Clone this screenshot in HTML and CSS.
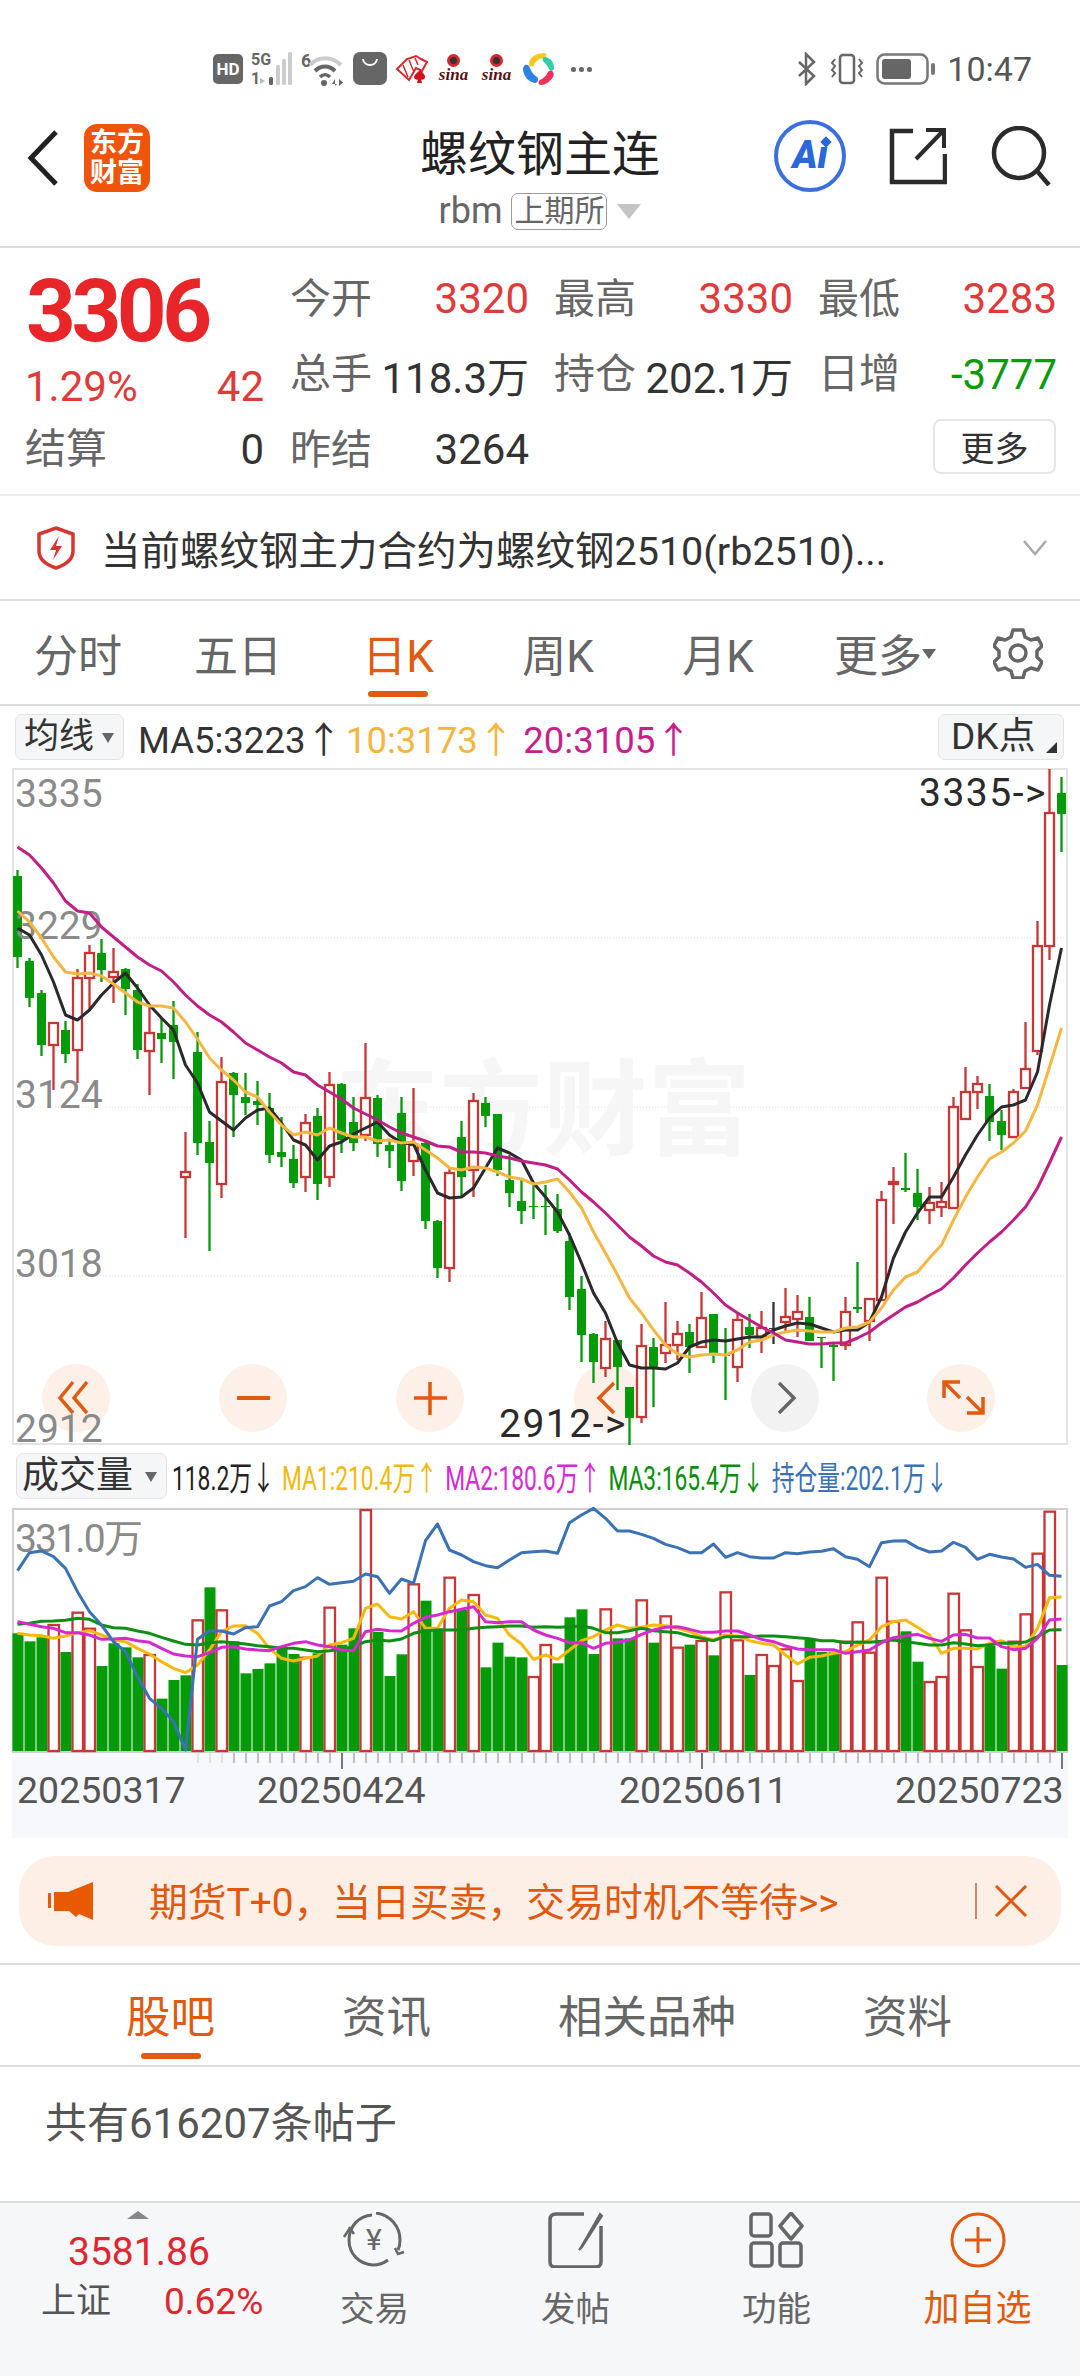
FILE: index.html
```html
<!DOCTYPE html>
<html lang="zh-CN">
<head>
  <meta charset="UTF-8" />
  <meta name="viewport" content="width=device-width, initial-scale=1.0" />
  <title>螺纹钢主连</title>
  <link rel="stylesheet" href="styles.css">
</head>
<body>
  <div class="status-bar">
    <div class="status-left">
      <span class="hd">HD</span>
      <svg class="st-signal" width="42" height="36" viewBox="0 0 42 36">
        <text x="0" y="14" class="st-tiny">5G</text>
        <text x="0" y="33" class="st-tiny">1</text>
        <path d="M9 33v-6l5 3z" fill="#bbb"/>
        <rect x="18" y="26" width="4" height="8" rx="1.5" fill="#666"/>
        <rect x="25" y="14" width="4" height="20" rx="1.5" fill="#ccc"/>
        <rect x="31" y="8" width="4" height="26" rx="1.5" fill="#ccc"/>
        <rect x="37" y="1" width="4" height="33" rx="1.5" fill="#ccc"/>
      </svg>
      <svg class="st-wifi" width="44" height="36" viewBox="0 0 44 36">
        <text x="0" y="16" class="st-six">6</text>
        <path d="M9 14C17 5 31 5 40 14" fill="none" stroke="#ccc" stroke-width="4"/>
        <path d="M14 20C20 14 28 14 34 20" fill="none" stroke="#666" stroke-width="4"/>
        <path d="M19 26C22 23 26 23 29 26" fill="none" stroke="#666" stroke-width="3.5"/>
        <circle cx="23" cy="32" r="3" fill="#666"/>
        <path d="M34 35v-7l-3 5h5M38 28v7l4-3.500z" fill="#666"/>
      </svg>
      <svg width="34" height="34" viewBox="0 0 34 34">
        <rect width="34" height="33" rx="7" fill="#666"/>
        <path d="M10 7c1 8 13 8 14 0" fill="none" stroke="#fff" stroke-width="2"/>
      </svg>
      <svg width="34" height="32" viewBox="0 0 34 32">
        <path d="M2 16L12 6l9-3 5 3 6 3-5 9-6-3-7 12z" fill="#fff" stroke="#d6282c" stroke-width="2"/>
        <path d="M8 12l5 12M14 7l5 12M20 5l3 7" stroke="#d6282c" stroke-width="1.500"/>
        <path d="M25 17c3 3 7 6 4 9-1 1-3 1-3 0l1 4h-5l1-4c0 1-2 1-3 0-3-3 2-6 5-9z" fill="#d6101a"/>
      </svg>
      <span class="sina"><i class="sina-eye"></i>sina</span>
      <span class="sina"><i class="sina-eye"></i>sina</span>
      <svg width="32" height="34" viewBox="0 0 32 34">
        <path d="M6 12c0-8 10-11 15-11 3 0 3 4 0 5-6 1-8 3-10 7-2 3-5 2-5-1z" fill="#f7c91c"/>
        <path d="M22 5c6 1 9 6 9 11 0 3-3 4-5 1-2-4-4-6-6-8-1-2 0-4 2-4z" fill="#33cfa4"/>
        <path d="M2 13c2-1 4 0 5 3 2 5 4 7 7 9 2 2 1 6-2 6C5 30 0 23 0 17c0-2 1-3 2-4z" fill="#2e82e6"/>
        <path d="M30 20c1 2 1 3 0 5-3 5-8 8-12 8-3 0-3-4-1-5 4-2 6-4 8-8 1-2 4-2 5 0z" fill="#f0305c"/>
      </svg>
      <span class="st-dots"><i></i><i></i><i></i></span>
    </div>
    <div class="status-right">
      <svg width="22" height="34" viewBox="0 0 22 34" fill="none" stroke="#666" stroke-width="2.500">
        <path d="M3 10l15 14-8 8V2l8 8L3 24"/>
      </svg>
      <svg width="36" height="32" viewBox="0 0 36 32" fill="none" stroke="#666" stroke-width="2.500">
        <rect x="11" y="2" width="14" height="28" rx="3"/>
        <path d="M6 6l-3 4 3 3-3 4 3 3-3 4M30 6l3 4-3 3 3 4-3 3 3 4" stroke-width="2"/>
      </svg>
      <svg width="60" height="32" viewBox="0 0 60 32">
        <rect x="1.500" y="1.500" width="50" height="29" rx="7" fill="none" stroke="#777" stroke-width="2.500"/>
        <rect x="6" y="6" width="29" height="20" rx="3" fill="#666"/>
        <rect x="55" y="10" width="4" height="12" rx="2" fill="#777"/>
      </svg>
      <span class="st-time">10:47</span>
    </div>
  </div>

  <header class="top-bar">
    <div class="top-left">
      <svg width="32" height="56" viewBox="0 0 32 56"><path d="M29 2L4 28l25 26" fill="none" stroke="#222" stroke-width="5"/></svg>
      <div class="logo"><span>东方</span><span>财富</span></div>
    </div>
    <div class="top-title">
      <div class="title">螺纹钢主连</div>
      <div class="sub">
        <span class="code">rbm</span>
        <span class="exch">上期所</span>
        <i class="sub-arrow"></i>
      </div>
    </div>
    <div class="top-right">
      <div class="ai"><span>Ai</span><i class="ai-star"></i></div>
      <svg width="58" height="58" viewBox="0 0 58 58" fill="none" stroke="#2b2b2b" stroke-width="4.500">
        <path d="M24 4H3v51h53V27"/>
        <path d="M27 32L54 4M37 3h18v18" stroke-width="4"/>
      </svg>
      <svg width="60" height="60" viewBox="0 0 60 60" fill="none" stroke="#2b2b2b" stroke-width="4.500">
        <circle cx="28" cy="27" r="25"/>
        <path d="M46 45l12 14"/>
      </svg>
    </div>
  </header>

  <section class="quote">
    <div class="quote-left">
      <div class="price">3306</div>
      <div class="change"><span>1.29%</span><span>42</span></div>
      <div class="settle"><span class="label">结算</span><span class="val">0</span></div>
    </div>
    <div class="quote-grid">
      <div class="cell"><span class="label">今开</span><span class="num up">3320</span></div>
      <div class="cell"><span class="label">最高</span><span class="num up">3330</span></div>
      <div class="cell"><span class="label">最低</span><span class="num up">3283</span></div>
      <div class="cell"><span class="label">总手</span><span class="num">118.3万</span></div>
      <div class="cell"><span class="label">持仓</span><span class="num">202.1万</span></div>
      <div class="cell"><span class="label">日增</span><span class="num down">-3777</span></div>
      <div class="cell"><span class="label">昨结</span><span class="num">3264</span></div>
      <div class="cell"></div>
      <div class="cell cell-end"><button class="more-btn">更多</button></div>
    </div>
  </section>

  <section class="notice">
    <svg width="40" height="44" viewBox="0 0 40 44">
      <path d="M20 2l17 6v17c0 9-8 14-17 17C11 39 3 34 3 25V8z" fill="none" stroke="#d9342f" stroke-width="3.500"/>
      <path d="M23 10l-9 14h6l-3 10 9-14h-6z" fill="#d9342f"/>
    </svg>
    <span class="notice-text">当前螺纹钢主力合约为螺纹钢2510(rb2510)...</span>
    <svg class="notice-more" width="26" height="16" viewBox="0 0 26 16"><path d="M2 1l11 13L24 1" fill="none" stroke="#aaa" stroke-width="2.500"/></svg>
  </section>

  <nav class="period-tabs">
    <a class="tab">分时</a>
    <a class="tab">五日</a>
    <a class="tab active">日K</a>
    <a class="tab">周K</a>
    <a class="tab">月K</a>
    <a class="tab">更多<i class="tab-arrow"></i></a>
    <svg class="gear" width="50" height="52" viewBox="0 0 50 52" fill="none" stroke="#666" stroke-width="3.500" stroke-linejoin="round">
      <path d="M20 3h10l2 7 6 3 7-2 4 8-5 5v6l5 5-4 8-7-2-6 3-2 7H20l-2-7-6-3-7 2-4-8 5-5v-6l-5-5 4-8 7 2 6-3z"/>
      <circle cx="25" cy="26" r="8"/>
    </svg>
  </nav>

  <div class="ma-row">
    <button class="pick">均线<i class="pick-arrow"></i></button>
    <span class="ma ma-black">MA5:3223↑</span>
    <span class="ma ma-yellow">10:3173↑</span>
    <span class="ma ma-pink">20:3105↑</span>
    <button class="pick pick-dk">DK点<i class="dk-corner"></i></button>
  </div>

  <svg id="kChart" class="chart" width="1080" height="678" viewBox="0 768 1080 678"></svg>

  <div class="vol-row">
    <button class="pick pick-vol">成交量<i class="pick-arrow"></i></button>
    <div class="vol-values">
      <span class="vol-a">118.2万↓</span>
      <span class="vol-b">MA1:210.4万↑</span>
      <span class="vol-c">MA2:180.6万↑</span>
      <span class="vol-d">MA3:165.4万↓</span>
      <span class="vol-e">持仓量:202.1万↓</span>
    </div>
  </div>

  <svg id="volChart" class="chart" width="1080" height="330" viewBox="0 1508 1080 330"></svg>

  <div class="banner">
    <svg width="46" height="40" viewBox="0 0 46 40">
      <rect x="0" y="12" width="3" height="15" fill="#e85a00"/>
      <path d="M6 11h14L45 1v38l-14-6-3 3-7-6H6z" fill="#e85a00"/>
    </svg>
    <span class="banner-text">期货T+0，当日买卖，交易时机不等待&gt;&gt;</span>
    <i class="banner-sep"></i>
    <svg width="34" height="32" viewBox="0 0 34 32"><path d="M2 1l30 30M32 1L2 31" fill="none" stroke="#e0590f" stroke-width="3"/></svg>
  </div>

  <nav class="info-tabs">
    <a class="tab active">股吧</a>
    <a class="tab">资讯</a>
    <a class="tab">相关品种</a>
    <a class="tab">资料</a>
  </nav>

  <div class="post-count">共有616207条帖子</div>

  <footer class="bottom-nav">
    <div class="index-box">
      <i class="index-arrow"></i>
      <div class="index-val">3581.86</div>
      <div class="index-row"><span>上证</span><b>0.62%</b></div>
    </div>
    <div class="nav-item">
      <svg width="66" height="56" viewBox="0 0 66 56" fill="none" stroke="#666" stroke-width="3">
        <path d="M30 3C17 4 7 14 7 28s10 24 24 25c6 0 11-2 15-5"/>
        <path d="M34 1c14 2 24 13 24 27 0 4-1 8-2 10"/>
        <path d="M8 16L2 25M7 15l5 7M62 40l-6 2-3-6" stroke-width="2.500"/>
        <text x="32" y="38" class="yen">¥</text>
      </svg>
      <span>交易</span>
    </div>
    <div class="nav-item">
      <svg width="56" height="56" viewBox="0 0 56 56" fill="none" stroke="#666" stroke-width="3.500">
        <path d="M36 2H8C4 2 2 4 2 8v42c0 3 2 5 5 5h41c3 0 5-2 5-5V14"/>
        <path d="M52 2L33 35l-2 3 3-3L54 4z" fill="#666" stroke-width="2"/>
      </svg>
      <span>发帖</span>
    </div>
    <div class="nav-item">
      <svg width="56" height="56" viewBox="0 0 56 56" fill="none" stroke="#666" stroke-width="3.500">
        <rect x="2" y="2" width="20" height="22" rx="3"/>
        <rect x="2" y="31" width="21" height="23" rx="3"/>
        <rect x="31" y="31" width="21" height="23" rx="3"/>
        <path d="M42 1l11 13-11 13-11-13z" stroke-linejoin="round"/>
      </svg>
      <span>功能</span>
    </div>
    <div class="nav-item nav-add">
      <svg width="56" height="56" viewBox="0 0 56 56" fill="none" stroke="#e05a0f" stroke-width="3">
        <circle cx="28" cy="28" r="26"/>
        <path d="M15 28h26M28 15v26"/>
      </svg>
      <span>加自选</span>
    </div>
  </footer>

  <script src="chart.js"></script>
</body>
</html>
```
FILE: styles.css
```css
* {
  box-sizing: border-box;
}
html, body {
  margin: 0;
  padding: 0;
}
body {
  width: 1080px;
  height: 2376px;
  overflow: hidden;
  background: #fff;
  font-family: Roboto, "Noto Sans CJK SC", sans-serif;
  color: #333;
}
i {
  font-style: normal;
}
button {
  font-family: inherit;
  padding: 0;
}

/* status bar */
.status-bar {
  height: 100px;
  display: flex;
  justify-content: space-between;
  align-items: flex-start;
  padding: 52px 48px 0 213px;
}
.status-left, .status-right {
  display: flex;
  align-items: center;
  height: 34px;
}
.status-left {
  gap: 8px;
}
.status-right {
  gap: 11px;
}
.hd {
  width: 30px;
  height: 30px;
  background: #666;
  color: #fff;
  border-radius: 5px;
  font-size: 17px;
  font-weight: 700;
  line-height: 30px;
  text-align: center;
}
.st-signal, .st-wifi {
  overflow: visible;
}
.st-tiny {
  font: 700 16px Roboto, sans-serif;
  fill: #666;
}
.st-six {
  font: 700 18px Roboto, sans-serif;
  fill: #666;
}
.sina {
  width: 33px;
  height: 34px;
  margin-right: 2px;
  display: flex;
  flex-direction: column;
  align-items: center;
  font: italic 700 17px/13px "Liberation Serif", serif;
  color: #5a0f0f;
}
.sina-eye {
  width: 13px;
  height: 13px;
  margin: 2px 0 1px;
  border: 3px solid #d6282c;
  border-radius: 50%;
  background: #333;
}
.st-dots {
  display: flex;
  gap: 3px;
  margin-left: 8px;
}
.st-dots i {
  width: 5px;
  height: 5px;
  border-radius: 50%;
  background: #666;
}
.st-time {
  font-size: 34px;
  color: #555;
  line-height: 34px;
}

/* header */
.top-bar {
  height: 148px;
  display: grid;
  grid-template-columns: 1fr auto 1fr;
  border-bottom: 2px solid #ddd;
}
.top-left {
  display: flex;
  align-items: center;
  gap: 25px;
  padding: 0 0 30px 27px;
}
.logo {
  width: 66px;
  height: 68px;
  background: #f0540a;
  border-radius: 13px;
  color: #fff;
  font-size: 27px;
  font-weight: 700;
  line-height: 30px;
  display: flex;
  flex-direction: column;
  align-items: center;
  justify-content: center;
}
.top-title {
  display: flex;
  flex-direction: column;
  align-items: center;
  padding-top: 25px;
}
.title {
  font-size: 48px;
  line-height: 60px;
  color: #222;
}
.sub {
  display: flex;
  align-items: center;
  margin-top: 7px;
  height: 38px;
}
.code {
  font-size: 36px;
  color: #666;
  margin-right: 9px;
}
.exch {
  width: 96px;
  height: 37px;
  border: 1.5px solid #999;
  border-radius: 7px;
  color: #666;
  font-size: 30px;
  line-height: 33px;
  text-align: center;
  margin-right: 10px;
}
.sub-arrow {
  border-left: 12px solid transparent;
  border-right: 12px solid transparent;
  border-top: 15px solid #c4c4c4;
}
.top-right {
  display: flex;
  align-items: center;
  justify-content: flex-end;
  gap: 44px;
  padding: 0 29px 34px 0;
}
.ai {
  position: relative;
  width: 72px;
  height: 72px;
  margin-right: -1px;
  border: 4.500px solid #3b6fe0;
  border-radius: 50%;
  color: #2b66dc;
  font-size: 38px;
  font-weight: 900;
  font-style: italic;
  line-height: 62px;
  text-align: center;
}
.ai-star {
  position: absolute;
  top: 14px;
  right: 12px;
  width: 8px;
  height: 8px;
  background: #2b66dc;
  transform: rotate(45deg);
}

/* quote */
.quote {
  height: 248px;
  display: flex;
  padding: 13px 0 0 25px;
  border-bottom: 2px solid #eee;
}
.quote-left {
  width: 239px;
  margin-right: 26px;
}
.price {
  height: 100px;
  margin-left: 1px;
  font-size: 87px;
  font-weight: 700;
  line-height: 100px;
  color: #e8262a;
  letter-spacing: -4.500px;
}
.change {
  height: 50px;
  display: flex;
  justify-content: space-between;
  font-size: 42px;
  line-height: 52px;
  color: #e03a3a;
}
.settle {
  height: 76px;
  display: flex;
  justify-content: space-between;
  align-items: center;
}
.label {
  font-size: 41px;
  color: #666;
  line-height: 50px;
}
.val {
  font-size: 42px;
  color: #333;
}
.quote-grid {
  display: grid;
  grid-template-columns: repeat(3, 239px);
  grid-auto-rows: 75.500px;
  column-gap: 25px;
}
.cell {
  display: flex;
  justify-content: space-between;
  align-items: center;
}
.cell-end {
  justify-content: flex-end;
}
.num {
  font-size: 42px;
  color: #333;
}
.num.up {
  color: #e03a3a;
}
.num.down {
  color: #0a9a0a;
}
.more-btn {
  width: 123px;
  height: 55px;
  margin: -7px 1px 0 0;
  background: #fff;
  border: 2px solid #e6e6e6;
  border-radius: 8px;
  font-size: 34px;
  color: #333;
}

/* notice */
.notice {
  height: 105px;
  display: flex;
  align-items: center;
  padding: 0 32px 0 36px;
  border-bottom: 2px solid #ddd;
}
.notice-text {
  flex: 1;
  margin-left: 25px;
  font-size: 39.500px;
  color: #333;
}

/* tabs */
.period-tabs {
  height: 105px;
  display: grid;
  grid-template-columns: repeat(6, 160px) 1fr;
  border-bottom: 2px solid #ddd;
  padding: 31px 0 0;
  margin-left: -2px;
}
.tab {
  display: flex;
  flex-direction: column;
  align-items: center;
  font-size: 44px;
  line-height: 50px;
  color: #666;
  position: relative;
}
.tab.active {
  color: #e05a0f;
}
.tab.active::after {
  content: "";
  width: 60px;
  height: 6px;
  margin-top: 9px;
  background: #e05a0f;
  border-radius: 3px;
}
.tab-arrow {
  position: absolute;
  top: 17px;
  right: 22px;
  border-left: 7px solid transparent;
  border-right: 7px solid transparent;
  border-top: 10px solid #666;
}
.gear {
  margin: -5px 0 0 35px;
}

/* MA rows */
.ma-row {
  height: 62px;
  display: flex;
  align-items: center;
  padding: 0 15px;
}
.pick {
  position: relative;
  width: 109px;
  height: 46px;
  background: #f5f6f8;
  border: 1.500px solid #e3e3e3;
  border-radius: 7px;
  font-size: 35px;
  line-height: 42px;
  color: #333;
  text-align: left;
  padding-left: 8px;
}
.pick-arrow {
  position: absolute;
  top: 18px;
  right: 9px;
  border-left: 6px solid transparent;
  border-right: 6px solid transparent;
  border-top: 10px solid #666;
}
.pick-dk {
  width: 126px;
  margin-left: auto;
  margin-right: 1px;
  font-size: 37px;
  padding-left: 12px;
}
.dk-corner {
  position: absolute;
  right: 6px;
  bottom: 6px;
  border-left: 11px solid transparent;
  border-bottom: 11px solid #333;
}
.ma {
  font-size: 36.500px;
  white-space: nowrap;
  margin-left: 14px;
}
.ma-black {
  color: #333;
}
.ma-yellow {
  color: #f5b53f;
  margin-left: 4px;
}
.ma-pink {
  color: #c81e8c;
  margin-left: 9px;
}
.chart {
  display: block;
  overflow: visible;
}
.vol-row {
  height: 62px;
  display: flex;
  align-items: center;
  padding-left: 16px;
  padding-bottom: 2px;
}
.pick-vol {
  width: 151px;
  font-size: 37px;
  padding-left: 5px;
  flex: none;
}
.vol-values {
  display: flex;
  gap: 10.500px;
  margin-left: 5px;
  white-space: nowrap;
  font-size: 33px;
  transform: scaleX(0.69);
  transform-origin: left center;
}
.vol-a {
  color: #222;
}
.vol-b {
  color: #f2b90f;
}
.vol-c {
  color: #d62ad6;
}
.vol-d {
  color: #0a8f0a;
}
.vol-e {
  color: #3a72b5;
}

/* chart text */
.axis-label {
  font-size: 39px;
  fill: #8a8a8a;
}
.vol-axis {
  letter-spacing: -1.800px;
}
.mark-label {
  font-size: 39px;
  letter-spacing: 1.500px;
  fill: #2a2a2a;
}
.watermark {
  font-size: 104px;
  font-weight: 700;
  fill: #f6f6f6;
}
.date-label {
  font-size: 37.500px;
  fill: #555;
}

/* banner */
.banner {
  height: 90px;
  margin: 18px 19px 0;
  background: #fdeee6;
  border-radius: 36px;
  display: flex;
  align-items: center;
  padding-left: 29px;
}
.banner-text {
  margin: -4px 0 0 55px;
  width: 826px;
  flex: none;
  font-size: 38.800px;
  color: #e0590f;
}
.banner-sep {
  width: 1.500px;
  height: 36px;
  background: #c8886a;
  margin-right: 17px;
}

/* lower tabs */
.info-tabs {
  height: 104px;
  margin-top: 17px;
  display: flex;
  gap: 127px;
  padding: 28px 0 0 126px;
  border-top: 2px solid #ddd;
  border-bottom: 2px solid #ddd;
}
.info-tabs .tab {
  font-size: 44.500px;
}
.info-tabs .tab.active::after {
  margin-top: 10px;
}
.post-count {
  height: 134px;
  padding: 32px 0 0 45px;
  font-size: 42px;
  line-height: 50px;
  color: #555;
}

/* bottom nav */
.bottom-nav {
  height: 175px;
  background: #f6f7f9;
  border-top: 2px solid #ddd;
  display: grid;
  grid-template-columns: 274px repeat(4, 201px);
}
.index-box {
  position: relative;
  padding: 27px 0 0 41px;
}
.index-arrow {
  position: absolute;
  top: 8px;
  left: 127px;
  border-left: 11px solid transparent;
  border-right: 11px solid transparent;
  border-bottom: 8px solid #888;
}
.index-val {
  font-size: 39px;
  line-height: 44px;
  color: #e0262e;
  margin-left: 27px;
}
.index-row {
  display: flex;
  align-items: center;
  margin-top: 6px;
  font-size: 35px;
  line-height: 44px;
  color: #555;
}
.index-row b {
  font-weight: 400;
  font-size: 37px;
  color: #e0262e;
  margin-left: 53px;
}
.nav-item {
  display: flex;
  flex-direction: column;
  align-items: center;
  padding-top: 9px;
  font-size: 34.500px;
  line-height: 44px;
  color: #666;
  gap: 19px;
}
.nav-add {
  font-size: 36px;
  color: #e05a0f;
}
.yen {
  font-size: 30px;
  fill: #666;
  stroke: none;
  text-anchor: middle;
}
```
FILE: chart.js
```js
// px positions read off the chart: x = 17.5 + 12 * i
const GREEN = '#049a08';
const RED = '#c93636';

// [color, wickTop, wickBottom, bodyTop, bodyBottom]
const candles = [
  ['g',870,968,876,957],['g',958,1007,961,998],['g',990,1056,993,1045],['r',1023,1090,1023,1045],
  ['g',1021,1063,1030,1054],['r',969,1083,978,1050],['r',945,1010,953,978],['g',939,982,953,970],
  ['r',948,1003,972,977],['g',968,1015,969,989],['g',984,1059,990,1050],['r',1007,1095,1033,1051],
  ['g',1018,1063,1033,1039],['g',1001,1079,1025,1042],['r',1132,1238,1172,1177],['g',1032,1155,1052,1143],
  ['g',1121,1251,1142,1163],['r',1057,1198,1082,1184],['g',1072,1137,1073,1095],['g',1073,1115,1097,1103],
  ['g',1081,1125,1101,1105],['g',1093,1163,1108,1155],['g',1117,1167,1152,1157],['g',1145,1188,1159,1183],
  ['r',1114,1192,1123,1177],['g',1108,1200,1116,1184],['r',1072,1187,1085,1177],['g',1083,1153,1084,1140],
  ['g',1097,1151,1122,1143],['r',1043,1141,1098,1135],['g',1095,1157,1098,1144],['g',1140,1168,1145,1151],
  ['g',1097,1191,1113,1181],['r',1088,1176,1145,1161],['g',1142,1229,1143,1221],['g',1220,1278,1221,1268],
  ['r',1168,1282,1173,1268],['g',1121,1197,1137,1177],['r',1093,1197,1101,1170],['g',1097,1127,1103,1116],
  ['g',1114,1176,1114,1170],['g',1155,1207,1180,1193],['g',1180,1224,1201,1211],['g',1185,1219,1206,1207],
  ['g',1185,1235,1206,1207],['g',1194,1233,1209,1231],['g',1233,1310,1241,1297],['g',1276,1362,1289,1335],
  ['g',1333,1383,1334,1362],['r',1321,1377,1339,1368],['g',1340,1390,1340,1367],['g',1387,1445,1387,1418],
  ['r',1324,1423,1346,1417],['g',1338,1407,1347,1367],['r',1302,1363,1345,1353],['r',1321,1360,1334,1345],
  ['g',1324,1373,1332,1347],['r',1292,1347,1318,1347],['g',1314,1363,1314,1353],['g',1328,1400,1354,1356],
  ['r',1313,1382,1320,1367],['g',1314,1348,1327,1335],['r',1311,1353,1328,1337],['k',1302,1344,1328,1329],
  ['r',1288,1333,1317,1322],['r',1295,1337,1312,1319],['g',1297,1341,1317,1341],['g',1337,1368,1337,1338],
  ['g',1343,1381,1345,1347],['r',1297,1350,1312,1345],['g',1262,1313,1307,1309],['r',1299,1341,1299,1321],
  ['r',1191,1300,1200,1300],['r',1167,1224,1182,1184],['g',1153,1192,1188,1190],['g',1169,1220,1193,1207],
  ['r',1187,1224,1203,1210],['r',1182,1217,1202,1207],['r',1097,1209,1107,1208],['r',1067,1120,1092,1119],
  ['r',1076,1109,1084,1092],['g',1084,1141,1096,1122],['g',1110,1150,1121,1135],['r',1089,1137,1092,1137],
  ['r',1022,1089,1069,1088],['r',921,1055,946,1051],['r',769,960,813,946],['g',777,852,793,814]
];

const ma5 = [928,935,955,982,1015,1020,1010,995,983,973,988,1005,1018,1030,1065,1083,1112,1121,1130,1118,
  1110,1108,1123,1140,1145,1160,1146,1142,1134,1128,1122,1135,1143,1144,1170,1193,1198,1197,1188,1168,
  1148,1153,1160,1183,1197,1212,1235,1263,1293,1313,1343,1365,1368,1368,1369,1363,1347,1342,1340,1341,
  1339,1337,1337,1330,1326,1323,1324,1328,1332,1330,1330,1322,1297,1258,1232,1213,1197,1197,1177,1155,
  1135,1118,1107,1105,1100,1072,1005,948];
const ma10 = [911,922,938,957,972,974,973,976,984,993,1002,1006,1006,1008,1022,1039,1058,1070,1080,1092,
  1097,1112,1125,1135,1132,1135,1128,1133,1137,1137,1141,1140,1143,1142,1150,1158,1168,1170,1167,1168,
  1172,1177,1179,1184,1182,1179,1192,1208,1232,1253,1275,1298,1313,1330,1345,1354,1357,1355,1354,1355,
  1350,1342,1340,1335,1332,1330,1331,1332,1332,1328,1327,1322,1308,1290,1277,1272,1258,1245,1220,1197,
  1177,1159,1152,1143,1131,1105,1067,1028];
const ma20 = [847,855,868,883,901,911,913,927,937,947,957,965,971,982,995,1006,1015,1022,1032,1043,
  1050,1057,1063,1072,1075,1085,1092,1099,1108,1114,1120,1127,1133,1137,1141,1146,1147,1152,1152,1153,
  1156,1158,1161,1163,1165,1169,1180,1192,1202,1213,1225,1237,1246,1256,1262,1265,1273,1282,1293,1305,
  1313,1320,1327,1333,1340,1342,1344,1344,1343,1343,1338,1332,1323,1315,1307,1302,1295,1289,1278,1265,
  1253,1242,1232,1220,1207,1188,1163,1137];

// volume values are y inside a 3x crop starting at 1500
const fromCrop = v => 1500 + v / 3;
const volBars = [
  ['g',400],['g',424],['g',412],['r',372],['g',456],['r',335],['r',383],['g',498],['g',430],['g',442],
  ['g',472],['r',462],['g',596],['g',540],['g',526],['r',358],['g',262],['r',328],['g',424],['g',520],
  ['g',507],['g',490],['g',440],['g',462],['r',470],['g',460],['r',320],['g',434],['g',385],['r',27],
  ['g',396],['g',528],['g',463],['r',250],['g',302],['g',385],['r',230],['g',330],['r',282],['g',502],
  ['g',428],['g',470],['g',472],['r',528],['r',432],['g',490],['g',352],['g',328],['g',462],['r',325],
  ['g',415],['g',415],['r',298],['g',428],['r',346],['r',440],['g',434],['r',420],['g',466],['r',274],
  ['r',418],['g',525],['r',462],['r',495],['r',445],['r',540],['g',420],['g',456],['g',455],['r',422],
  ['r',364],['r',455],['r',230],['r',362],['g',394],['g',485],['r',543],['r',528],['r',278],['r',388],
  ['r',498],['g',438],['g',506],['r',422],['r',340],['r',158],['r',32],['g',495]
];
const volBlue = [212,158,153,170,205,275,335,375,425,455,530,595,625,665,750,418,392,393,402,383,380,318,
  305,272,260,233,253,248,244,222,230,280,237,250,122,72,150,165,185,197,203,180,158,155,153,160,68,45,25,
  55,93,93,103,115,133,143,158,158,132,172,158,170,174,174,158,161,156,154,146,170,178,200,128,123,122,143,
  156,153,127,142,178,163,171,177,202,193,226,229];
const volYellow = [400,405,407,415,408,398,392,405,420,425,445,462,485,505,518,495,450,395,378,377,400,445,
  475,483,475,468,435,428,415,325,312,350,357,335,385,385,325,300,305,345,355,405,432,478,465,478,450,422,
  410,390,375,385,382,375,377,385,395,410,420,405,408,422,430,435,465,492,472,468,460,455,435,420,380,365,
  360,382,405,460,445,445,447,430,422,440,440,385,293,291];
const volPink = [365,373,380,385,398,398,405,418,417,415,422,427,445,462,468,470,458,442,440,447,450,452,440,
  430,425,435,440,450,452,395,388,392,393,370,352,345,335,328,320,365,368,365,365,390,405,415,428,428,445,
  430,427,420,403,390,382,380,388,397,397,393,393,405,418,425,438,447,449,449,449,460,455,450,428,413,408,
  403,415,424,405,403,414,414,440,449,445,415,360,357];
const volGreen = [373,370,364,363,361,355,358,375,383,385,393,400,412,423,433,435,428,425,428,432,437,440,445,
  445,450,455,452,448,440,425,420,423,417,400,392,390,390,390,385,382,380,378,378,382,380,382,380,378,385,
  398,398,392,385,392,395,398,408,415,422,410,410,410,408,408,410,413,416,422,422,428,426,427,424,420,425,
  430,435,435,428,432,437,434,430,430,426,410,390,389];

const centerX = i => 17.5 + 12 * i;
const line = (ys, color, width) => {
  const pts = ys.map((y, i) => `${centerX(i)},${y}`).join(' ');
  return `<polyline points="${pts}" fill="none" stroke="${color}" stroke-width="${width}" stroke-linejoin="round"/>`;
};
const text = (x, y, cls, str) => `<text x="${x}" y="${y}" class="${cls}">${str}</text>`;

function floatBtn(cx, bg, icon) {
  return `<circle cx="${cx}" cy="1398" r="34" fill="${bg}"/><g fill="none" stroke-width="3.500">${icon}</g>`;
}

function drawKChart() {
  const O = '#e05a0f';
  let s = '<rect x="13" y="769" width="1054" height="675" fill="#fff" stroke="#e4e4e4" stroke-width="2"/>';
  [938, 1107, 1276].forEach(y => {
    s += `<line x1="13" x2="1067" y1="${y}" y2="${y}" stroke="#dedede" stroke-width="1" stroke-dasharray="1 2"/>`;
  });
  s += text(335, 1147, 'watermark', '东方财富');
  s += floatBtn(76, '#fdf0e8', `<path d="M73 1382l-13 16 13 15M87 1382l-13 16 13 15" stroke="${O}"/>`);
  s += floatBtn(253, '#fdf0e8', `<path d="M237 1398h33" stroke="${O}" stroke-width="4"/>`);
  s += floatBtn(430, '#fdf0e8', `<path d="M414 1398h33M430 1382v33" stroke="${O}"/>`);
  s += floatBtn(608, '#fdf0e8', `<path d="M614 1383l-15 15 15 15" stroke="${O}"/>`);
  s += floatBtn(785, '#f2f2f2', `<path d="M779 1383l15 15-15 15" stroke="#666"/>`);
  s += floatBtn(961, '#fdf0e8', `<path d="M967 1397l16 16M983 1397v16h-16M960 1398l-16-16M944 1398v-16h16" stroke="${O}"/>`);
  candles.forEach((c, i) => {
    const x = centerX(i);
    const col = c[0] === 'g' ? GREEN : c[0] === 'r' ? RED : '#333';
    s += `<line x1="${x}" x2="${x}" y1="${c[1]}" y2="${c[2]}" stroke="${col}" stroke-width="2.300"/>`;
    if (c[0] === 'r') {
      s += `<rect x="${x - 4.5}" y="${c[3]}" width="9" height="${c[4] - c[3]}" fill="#fff" stroke="${col}" stroke-width="2.300"/>`;
    } else {
      s += `<rect x="${x - 4.5}" y="${c[3]}" width="9" height="${c[4] - c[3]}" fill="${col}"/>`;
    }
  });
  s += text(15, 807, 'axis-label', '3335');
  s += text(15, 939, 'axis-label', '3229');
  s += text(15, 1108, 'axis-label', '3124');
  s += text(15, 1277, 'axis-label', '3018');
  s += text(15, 1442, 'axis-label', '2912');
  s += text(919, 806, 'mark-label', '3335-&gt;');
  s += text(499, 1437, 'mark-label', '2912-&gt;');
  s += line(ma5, '#2a2a2a', 3) + line(ma10, '#f5b642', 3) + line(ma20, '#c01f85', 3);
  document.getElementById('kChart').innerHTML = s;
}

function drawVolChart() {
  const bottom = 1751;
  let s = '<rect x="13" y="1509" width="1054" height="243" fill="#fff" stroke="#cfcfcf" stroke-width="2"/>';
  volBars.forEach((b, i) => {
    const x = centerX(i);
    const top = fromCrop(b[1]);
    if (b[0] === 'g') {
      s += `<rect x="${x - 5}" y="${top}" width="11" height="${bottom - top}" fill="${GREEN}"/>`;
    } else {
      s += `<rect x="${x - 5}" y="${top + 1}" width="10.500" height="${bottom - top - 1}" fill="#fff" stroke="${RED}" stroke-width="2.300"/>`;
    }
  });
  s += text(15, 1552, 'axis-label vol-axis', '331.0万');
  s += line(volYellow.map(fromCrop), '#f6b90c', 3);
  s += line(volGreen.map(fromCrop), '#0e8f14', 3);
  s += line(volPink.map(fromCrop), '#d62ad0', 3);
  s += line(volBlue.map(fromCrop), '#3a72b5', 3);
  s += '<rect x="12" y="1753" width="1056" height="85" fill="#f7f8fb"/>';
  for (let i = 15; i < 88; i++) {
    const major = i === 27 || i === 57 || i === 87;
    const color = i < 18 ? '#ddd' : major ? '#777' : '#aaa';
    const x = centerX(i) + 0.5;
    s += `<line x1="${x}" x2="${x}" y1="1753" y2="${major ? 1769 : 1763}" stroke="${color}" stroke-width="${major ? 2 : 1.5}"/>`;
  }
  s += text(17, 1803, 'date-label', '20250317');
  s += text(257, 1803, 'date-label', '20250424');
  s += text(619, 1803, 'date-label', '20250611');
  s += text(895, 1803, 'date-label', '20250723');
  document.getElementById('volChart').innerHTML = s;
}

drawKChart();
drawVolChart();
```
